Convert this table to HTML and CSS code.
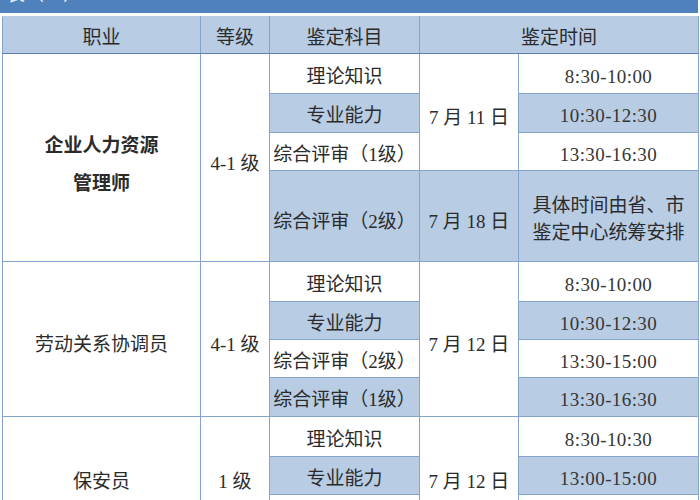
FILE: index.html
```html
<!DOCTYPE html>
<html lang="zh-CN">
<head>
<meta charset="utf-8">
<title>鉴定时间表</title>
<link rel="stylesheet" href="styles.css">
</head>
<body>
<div class="topbar"><span class="topbar-title">表（一）</span></div>
<table class="sched">
  <colgroup>
    <col class="c-job"><col class="c-lvl"><col class="c-subj"><col class="c-date"><col class="c-time">
  </colgroup>
  <thead>
    <tr class="r-head">
      <th>职业</th><th>等级</th><th>鉴定科目</th><th colspan="2">鉴定时间</th>
    </tr>
  </thead>
  <tbody>
    <tr class="r40">
      <td rowspan="4" class="span job"><div>企业人力资源</div><div>管理师</div></td>
      <td rowspan="4" class="span">4-1 级</td>
      <td>理论知识</td>
      <td rowspan="3" class="span">7 月 11 日</td>
      <td class="n">8:30-10:00</td>
    </tr>
    <tr class="r39">
      <td class="alt">专业能力</td>
      <td class="alt n">10:30-12:30</td>
    </tr>
    <tr class="r38">
      <td>综合评审（1级）</td>
      <td class="n">13:30-16:30</td>
    </tr>
    <tr class="r91">
      <td class="alt span">综合评审（2级）</td>
      <td class="alt span">7 月 18 日</td>
      <td class="alt note">具体时间由省、市<br>鉴定中心统筹安排</td>
    </tr>

    <tr class="r40">
      <td rowspan="4" class="span">劳动关系协调员</td>
      <td rowspan="4" class="span">4-1 级</td>
      <td>理论知识</td>
      <td rowspan="4" class="span">7 月 12 日</td>
      <td class="n">8:30-10:00</td>
    </tr>
    <tr class="r38">
      <td class="alt">专业能力</td>
      <td class="alt n">10:30-12:30</td>
    </tr>
    <tr class="r38">
      <td>综合评审（2级）</td>
      <td class="n">13:30-15:00</td>
    </tr>
    <tr class="r39">
      <td class="alt">综合评审（1级）</td>
      <td class="alt n">13:30-16:30</td>
    </tr>

    <tr class="r40">
      <td rowspan="3" class="span">保安员</td>
      <td rowspan="3" class="span">1 级</td>
      <td>理论知识</td>
      <td rowspan="3" class="span">7 月 12 日</td>
      <td class="n">8:30-10:30</td>
    </tr>
    <tr class="r38">
      <td class="alt">专业能力</td>
      <td class="alt n">13:00-15:00</td>
    </tr>
    <tr class="r40">
      <td>综合评审</td>
      <td class="n">15:30-16:30</td>
    </tr>
  </tbody>
</table>
</body>
</html>
```

FILE: styles.css
```css
html, body {
  margin: 0;
  padding: 0;
  background: #ffffff;
}

body {
  width: 700px;
  font-family: "Liberation Serif", "Noto Sans CJK SC", serif;
  font-size: 19px;
  color: #2b2b2b;
}

.topbar {
  width: 698px;
  height: 13px;
  background: #4f81bd;
  overflow: hidden;
  margin-bottom: 3px;
}

.topbar-title {
  display: block;
  margin-top: -15px;
  padding-left: 6px;
  line-height: 19px;
  color: #e8eef7;
}

.sched {
  border-collapse: collapse;
  margin-left: 2px;
  table-layout: fixed;
  width: 696px;
}

.c-job { width: 198px; }
.c-lvl { width: 69px; }
.c-subj { width: 150px; }
.c-date { width: 99px; }
.c-time { width: 180px; }

.sched th,
.sched td {
  border: 1px solid #86a3cf;
  text-align: center;
  vertical-align: middle;
  padding: 6px 0 0 0;
  line-height: 22px;
  font-weight: normal;
  white-space: nowrap;
}

.r-head th {
  background: #b8cce4;
  height: 30px;
  border-bottom-color: #5e7fb0;
  border-top-color: #b8cce4;
}

.r38 { height: 38px; }
.r39 { height: 39px; }
.r40 { height: 40px; }
.r91 { height: 91px; }

.sched td.alt {
  background: #b8cce4;
}

.sched td.n {
  letter-spacing: 0.4px;
  color: #363636;
}

.sched td.span {
  padding-top: 12px;
}

.sched td.job {
  line-height: 38px;
  padding-top: 14px;
  font-weight: bold;
}

.sched td.note {
  line-height: 27px;
  padding-top: 6px;
}
```
